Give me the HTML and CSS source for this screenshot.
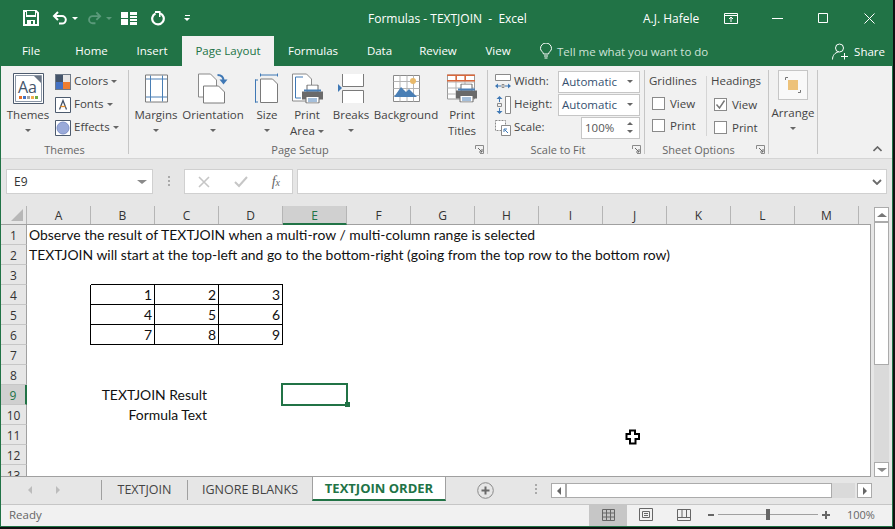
FILE: index.html
```html
<!DOCTYPE html>
<html lang="en">

<head>
    <meta charset="UTF-8">
    <title>Formulas - TEXTJOIN - Excel</title>
    <link rel="stylesheet" href="styles.css">
</head>

<body>
    <svg class="sprite" width="0" height="0">
        <symbol id="printer" viewBox="0 0 21 19">
            <path d="M5 .5h11v7H5z" fill="#fff" stroke="#6a6a6a"/>
            <path d="M0 7h21v8h-4v-3H4v3H0z" fill="#6a6a6a"/>
            <path d="M4 12h13v6.500H4z" fill="#fff" stroke="#6a6a6a"/>
            <path d="M6 14.500h9M6 16.500h9" stroke="#4a7fb5"/>
            <path d="M2 5h17v2H2z" fill="#4a7fb5"/>
        </symbol>
    </svg>

    <div class="app">
        <div class="titlebar">
            <div class="qat">
                <svg class="qat-save" width="16" height="16" viewBox="0 0 16 16"><path d="M1 1h12l2 2v12H1z" fill="none" stroke="#fff" stroke-width="2"/><path d="M3 1h10v6H3z" fill="#fff"/><path d="M4 1h8v4H4z" fill="#217346"/><path d="M4 10h8v5H4z" fill="#fff"/><path d="M8 11h2v3H8z" fill="#217346"/></svg>
                <svg class="qat-undo" width="16" height="14" viewBox="0 0 16 14"><path d="M6 1 2 5l4 4M2 5h8a3.800 3.800 0 0 1 0 7.600H7" fill="none" stroke="#fff" stroke-width="2"/></svg>
                <i class="caret caret-white qat-caret"></i>
                <svg class="qat-redo" width="15" height="14" viewBox="0 0 16 14"><path d="M10 1l4 4-4 4M14 5H6a3.800 3.800 0 0 0 0 7.600h3" fill="none" stroke="#5b9a7b" stroke-width="2"/></svg>
                <i class="caret caret-dim qat-caret"></i>
                <svg class="qat-grid" width="16" height="13" viewBox="0 0 16 13"><path d="M0 0h7v6H0zM0 7h7v6H0zM9 0h7v3H9zM9 4h7v2H9zM9 7h7v2H9zM9 10h7v3H9z" fill="#fff"/></svg>
                <svg class="qat-refresh" width="15" height="15" viewBox="0 0 15 15"><path d="M9 2.200a5.800 5.800 0 1 1-4.500.2" fill="none" stroke="#fff" stroke-width="2.200"/><path d="M8 0v6h1.500V0z" fill="#fff"/><path d="M4 0h5v2H4z" fill="#fff"/></svg>
                <span class="qat-custom"><b></b><i class="caret caret-white"></i></span>
            </div>
            <div class="doc-title">Formulas - TEXTJOIN &nbsp;-&nbsp; Excel</div>
            <div class="user">A.J. Hafele</div>
            <svg class="win-ribbon" width="14" height="11" viewBox="0 0 14 11"><path d="M.5 .5h13v10H.5zM.5 2.500h13M7 9V4M5 6l2-2 2 2" fill="none" stroke="#fff"/></svg>
            <svg class="win-min" width="11" height="1" viewBox="0 0 11 1"><path d="M0 .5h11" stroke="#fff"/></svg>
            <svg class="win-max" width="10" height="10" viewBox="0 0 10 10"><path d="M.5 .5h9v9h-9z" fill="none" stroke="#fff"/></svg>
            <svg class="win-close" width="11" height="11" viewBox="0 0 11 11"><path d="M.5 .5l10 10M10.500 .5l-10 10" fill="none" stroke="#fff"/></svg>
        </div>

        <nav class="tabs">
            <span class="tab tab-file">File</span>
            <span class="tab tab-home">Home</span>
            <span class="tab tab-insert">Insert</span>
            <span class="tab tab-active">Page Layout</span>
            <span class="tab tab-formulas">Formulas</span>
            <span class="tab tab-data">Data</span>
            <span class="tab tab-review">Review</span>
            <span class="tab tab-view">View</span>
            <svg class="bulb" width="12" height="16" viewBox="0 0 12 16"><path d="M3.500 11C3 8.500.5 8 .5 5.500a5.500 5.500 0 0 1 11 0C11.500 8 9 8.500 8.500 11zM4 13h4M4.500 15h3" fill="none" stroke="#fff"/></svg>
            <span class="tell">Tell me what you want to do</span>
            <svg class="share-icon" width="17" height="17" viewBox="0 0 17 17"><circle cx="7.500" cy="5" r="4" fill="none" stroke="#fff"/><path d="M.5 16.500c0-4 2.500-7 6-7.500M12.500 10v6.500M9 13.500h7" fill="none" stroke="#fff"/></svg>
            <span class="share">Share</span>
        </nav>

        <div class="ribbon">
            <section class="group group-themes">
                <div class="group-body">
                    <div class="big big-themes">
                        <svg class="icon" width="31" height="31" viewBox="0 0 31 31"><path d="M.5 .5h30v30H.5z" fill="#fff" stroke="#4d5b6e"/><path d="M2.500 2.500h26v26h-26z" fill="#fff" stroke="#8b96a5"/><path d="M21 3h7v7z" fill="#6b7686"/><text x="5" y="20" class="aa">Aa</text><path d="M6 23h3v3H6z" fill="#e8702a"/><path d="M10 23h3v3h-3z" fill="#4472c4"/><path d="M14 23h3v3h-3z" fill="#a5a5a5"/><path d="M18 23h3v3h-3z" fill="#f0ad4e"/><path d="M22 23h3v3h-3z" fill="#70ad47"/></svg>
                        <span class="big-label">Themes</span>
                        <i class="caret"></i>
                    </div>
                    <div class="minis">
                        <div class="mini">
                            <svg width="16" height="16" viewBox="0 0 16 16"><path d="M0 0h16v16H0z" fill="#6f7a88"/><path d="M1 1h7v7H1z" fill="#44546a"/><path d="M8 1h7v7H8z" fill="#e7e6e6"/><path d="M1 8h7v7H1z" fill="#4472c4"/><path d="M8 8h7v7H8z" fill="#ed7d31"/></svg>
                            <span>Colors</span><i class="caret"></i>
                        </div>
                        <div class="mini">
                            <svg width="16" height="16" viewBox="0 0 16 16"><path d="M.5 .5h15v15H.5z" fill="#fff" stroke="#4d5b6e"/><path d="M4.500 12.500 8 3.500l3.500 9" fill="none" stroke="#44546a" stroke-width="1.300"/><path d="M5.500 9.500h5" stroke="#e8902a" stroke-width="1.300"/></svg>
                            <span>Fonts</span><i class="caret"></i>
                        </div>
                        <div class="mini">
                            <svg width="16" height="16" viewBox="0 0 16 16"><path d="M.5 .5h15v15H.5z" fill="#fff" stroke="#4d5b6e"/><circle cx="8" cy="8" r="6" fill="#9aaad9" stroke="#7f92c8"/></svg>
                            <span>Effects</span><i class="caret"></i>
                        </div>
                    </div>
                </div>
                <div class="group-label">Themes</div>
            </section>

            <section class="group group-setup">
                <div class="group-body">
                    <div class="big big-margins">
                        <svg class="icon" width="23" height="28" viewBox="0 0 23 28"><path d="M.5 .5h22v27H.5z" fill="#fff" stroke="#7a7a7a"/><path d="M5.500 1v26M17.500 1v26M1 4.500h21M1 22.500h21" fill="none" stroke="#4a7fb5"/></svg>
                        <span class="big-label">Margins</span>
                        <i class="caret"></i>
                    </div>
                    <div class="big big-orient">
                        <svg class="icon" width="30" height="30" viewBox="0 0 30 30"><path d="M.5 .5h12l6 6v17H.5z" fill="#fff" stroke="#8a8a8a"/><path d="M5.500 12.500h15l6 6v11h-21z" fill="#fff" stroke="#7a7a7a"/><path d="M19.500 1.500c4 0 6 1.500 6 6" fill="none" stroke="#3f78b5" stroke-width="2"/><path d="M21.500 6h8L25.500 11z" fill="#3f78b5"/></svg>
                        <span class="big-label">Orientation</span>
                        <i class="caret"></i>
                    </div>
                    <div class="big big-size">
                        <svg class="icon" width="24" height="30" viewBox="0 0 24 30"><path d="M5 1.500h18M5.500 0v3M22.500 0v3M.5 6v23M0 6.500h3M0 28.500h3" fill="none" stroke="#3f78b5"/><path d="M5.500 5.500h12l5 5v18.500h-17z" fill="#fff" stroke="#7a7a7a"/></svg>
                        <span class="big-label">Size</span>
                        <i class="caret"></i>
                    </div>
                    <div class="big big-area">
                        <svg class="icon" width="31" height="30" viewBox="0 0 31 30"><path d="M.5 .5h14l5 5v22H.5z" fill="#fff" stroke="#8a8a8a"/><path d="M11 3.500H3.500v21H9" fill="none" stroke="#3f78b5"/><use href="#printer" x="10" y="11" width="21" height="19"/></svg>
                        <span class="big-label">Print</span>
                        <span class="big-label">Area<i class="caret caret-inline"></i></span>
                    </div>
                    <div class="big big-breaks">
                        <svg class="icon" width="26" height="29" viewBox="0 0 26 29"><path d="M4.500 0v12.500h21V0M4.500 29V16.500h21V29" fill="#fff" stroke="#7a7a7a"/><path d="M0 10l4 4-4 4z" fill="#3f78b5"/></svg>
                        <span class="big-label">Breaks</span>
                        <i class="caret"></i>
                    </div>
                    <div class="big big-bg">
                        <svg class="icon" width="27" height="27" viewBox="0 0 27 27"><path d="M.5 .5h26v26H.5z" fill="#fff" stroke="#8a8a8a"/><path d="M.5 6.500h26M.5 13.500h26M.5 20.500h26M7 .5v26M14 .5v26M20.500 .5v26" fill="none" stroke="#b5b5b5"/><circle cx="20" cy="6" r="3" fill="#e8b96a"/><path d="M1 22l7-10 5 5 3-3 8 8z" fill="#4a7fb5"/></svg>
                        <span class="big-label">Background</span>
                    </div>
                    <div class="big big-titles">
                        <svg class="icon" width="30" height="28" viewBox="0 0 30 28"><path d="M.5 .5h27v24H.5z" fill="#fff" stroke="#9a9a9a"/><path d="M.5 7.500h27M.5 13.500h27M.5 19.500h27M9 1v23M18 1v23" fill="none" stroke="#b5b5b5"/><path d="M0 0h28v1.500H0zM0 5.500h28V7H0zM8.500 0H10v6H8.500zM17.500 0H19v6h-1.500z" fill="#d9683c"/><use href="#printer" x="9" y="9" width="21" height="19"/></svg>
                        <span class="big-label">Print</span>
                        <span class="big-label">Titles</span>
                    </div>
                </div>
                <div class="group-label has-launcher">Page Setup</div>
                <svg class="launcher" width="9" height="9" viewBox="0 0 9 9"><path d="M.5 4V.5H8.500V8.500H5" fill="none" stroke="#8a8a8a"/><path d="M3 3l4 4M7 4v3H4" fill="none" stroke="#6a6a6a"/></svg>
            </section>

            <section class="group group-scale">
                <div class="group-body scale-rows">
                    <div class="scale-row">
                        <svg width="16" height="16" viewBox="0 0 16 16"><path d="M.5 .5h15v6h-15z" fill="#fff" stroke="#8a8a8a"/><path d="M0 12l3-2.500v5zM16 12l-3-2.500v5z" fill="#3f78b5"/><path d="M3 11.500h3v1H3zM10 11.500h3v1h-3z" fill="#3f78b5"/><path d="M7 10.500h2v3H7z" fill="none" stroke="#8a8a8a"/></svg>
                        <span class="scale-label">Width:</span>
                        <div class="combo">Automatic<i class="caret"></i></div>
                    </div>
                    <div class="scale-row">
                        <svg width="16" height="18" viewBox="0 0 16 18"><path d="M10.500 .5h5v17h-5z" fill="#fff" stroke="#8a8a8a"/><path d="M4.500 0l3 3h-6zM4.500 18l3-3h-6z" fill="#3f78b5"/><path d="M4 3h1v3H4zM4 12h1v3H4z" fill="#3f78b5"/><path d="M2.500 7.500h4v3h-4z" fill="none" stroke="#8a8a8a"/></svg>
                        <span class="scale-label">Height:</span>
                        <div class="combo">Automatic<i class="caret"></i></div>
                    </div>
                    <div class="scale-row">
                        <svg width="16" height="16" viewBox="0 0 16 16"><path d="M.5 .5h10v10H.5z" fill="#fff" stroke="#8a8a8a" stroke-dasharray="2 1"/><path d="M6.500 5.500h9v10h-9z" fill="#fff" stroke="#8a8a8a"/><path d="M13 13L9.500 9.500M9 12V9h3" fill="none" stroke="#3f78b5"/></svg>
                        <span class="scale-label">Scale:</span>
                        <div class="combo combo-scale">100%
                            <span class="spin"><i class="caret caret-up"></i><i class="caret"></i></span>
                        </div>
                    </div>
                </div>
                <div class="group-label has-launcher">Scale to Fit</div>
                <svg class="launcher" width="9" height="9" viewBox="0 0 9 9"><path d="M.5 4V.5H8.500V8.500H5" fill="none" stroke="#8a8a8a"/><path d="M3 3l4 4M7 4v3H4" fill="none" stroke="#6a6a6a"/></svg>
            </section>

            <section class="group group-sheet">
                <div class="group-body">
                    <div class="opt opt-grid">
                        <div class="opt-title">Gridlines</div>
                        <div class="opt-row"><i class="check"></i>View</div>
                        <div class="opt-row"><i class="check"></i>Print</div>
                    </div>
                    <div class="opt">
                        <div class="opt-title">Headings</div>
                        <div class="opt-row"><i class="check"><svg width="11" height="11" viewBox="0 0 11 11"><path d="M1.500 5.500 4.500 9 9.500 1.500" fill="none" stroke="#777" stroke-width="1.400"/></svg></i>View</div>
                        <div class="opt-row"><i class="check"></i>Print</div>
                    </div>
                </div>
                <div class="group-label has-launcher">Sheet Options</div>
                <svg class="launcher" width="9" height="9" viewBox="0 0 9 9"><path d="M.5 4V.5H8.500V8.500H5" fill="none" stroke="#8a8a8a"/><path d="M3 3l4 4M7 4v3H4" fill="none" stroke="#6a6a6a"/></svg>
            </section>

            <section class="group group-arrange">
                <div class="arrange-btn">
                    <svg width="16" height="16" viewBox="0 0 16 16"><path d="M.5 3V.5H3M15.500 13v2.500H13" fill="none" stroke="#777"/><path d="M3 3h10v10H3z" fill="#edc27a"/></svg>
                </div>
                <span class="big-label arrange-label">Arrange</span>
                <i class="caret"></i>
            </section>

            <svg class="collapse" width="9" height="6" viewBox="0 0 9 6"><path d="M.5 5l4-4 4 4" fill="none" stroke="#666" stroke-width="1.600"/></svg>
        </div>

        <div class="formula-band">
            <div class="namebox">E9<i class="caret caret-big"></i></div>
            <span class="dots"><b></b><b></b><b></b></span>
            <div class="fx-box">
                <svg width="12" height="12" viewBox="0 0 12 12"><path d="M1 1l10 10M11 1 1 11" fill="none" stroke="#c6c6c6" stroke-width="1.600"/></svg>
                <svg width="14" height="12" viewBox="0 0 14 12"><path d="M1 6l4 4 8-9" fill="none" stroke="#c6c6c6" stroke-width="2"/></svg>
                <span class="fx">f<small>x</small></span>
            </div>
            <div class="formula-input">
                <svg width="10" height="6" viewBox="0 0 10 6"><path d="M1 1l4 4 4-4" fill="none" stroke="#6a6a6a" stroke-width="1.800"/></svg>
            </div>
        </div>

        <div class="work">
            <div class="sheet">
                <div class="col-heads">
                    <div class="corner"><i></i></div>
                    <div class="col">A</div>
                    <div class="col">B</div>
                    <div class="col">C</div>
                    <div class="col">D</div>
                    <div class="col col-on">E</div>
                    <div class="col">F</div>
                    <div class="col">G</div>
                    <div class="col">H</div>
                    <div class="col">I</div>
                    <div class="col">J</div>
                    <div class="col">K</div>
                    <div class="col">L</div>
                    <div class="col">M</div>
                </div>
                <div class="rows">
                    <div class="row"><div class="num">1</div><div class="text">Observe the result of TEXTJOIN when a multi-row / multi-column range is selected</div></div>
                    <div class="row"><div class="num">2</div><div class="text">TEXTJOIN will start at the top-left and go to the bottom-right (going from the top row to the bottom row)</div></div>
                    <div class="row"><div class="num">3</div><div class="cell"></div><div class="cell top"></div><div class="cell top"></div><div class="cell top"></div></div>
                    <div class="row"><div class="num">4</div><div class="cell edge"></div><div class="cell box">1</div><div class="cell box">2</div><div class="cell box">3</div></div>
                    <div class="row"><div class="num">5</div><div class="cell edge"></div><div class="cell box">4</div><div class="cell box">5</div><div class="cell box">6</div></div>
                    <div class="row"><div class="num">6</div><div class="cell edge"></div><div class="cell box">7</div><div class="cell box">8</div><div class="cell box">9</div></div>
                    <div class="row"><div class="num">7</div></div>
                    <div class="row"><div class="num">8</div></div>
                    <div class="row"><div class="num num-on">9</div><div class="label">TEXTJOIN Result</div><div class="cell"></div><div class="cell selected"></div></div>
                    <div class="row"><div class="num">10</div><div class="label">Formula Text</div></div>
                    <div class="row"><div class="num">11</div></div>
                    <div class="row"><div class="num">12</div></div>
                    <div class="row"><div class="num">13</div></div>
                </div>
            </div>
            <div class="vscroll">
                <div class="sb-btn"><i class="caret caret-up caret-big"></i></div>
                <div class="sb-thumb"></div>
                <div class="sb-track"></div>
                <div class="sb-btn"><i class="caret caret-big"></i></div>
            </div>
        </div>

        <div class="sheet-tabs">
            <div class="nav-arrows"><i class="tri tri-left"></i><i class="tri tri-right"></i></div>
            <div class="sheet-tab sheet-tab-1">TEXTJOIN</div>
            <div class="sheet-tab sheet-tab-2">IGNORE BLANKS</div>
            <div class="sheet-tab-on">TEXTJOIN ORDER</div>
            <svg class="add-sheet" width="17" height="17" viewBox="0 0 17 17"><circle cx="8.500" cy="8.500" r="7.800" fill="none" stroke="#8a8a8a"/><path d="M4.500 8.500h8M8.500 4.500v8" fill="none" stroke="#6a6a6a" stroke-width="2"/></svg>
            <span class="dots dots-tabs"><b></b><b></b><b></b></span>
            <div class="hscroll">
                <div class="hs-btn"><i class="tri tri-left tri-dark"></i></div>
                <div class="hs-thumb"></div>
                <div class="hs-track"></div>
                <div class="hs-btn hs-last"><i class="tri tri-right tri-dark"></i></div>
            </div>
        </div>

        <footer class="status">
            <span class="ready">Ready</span>
            <div class="view-btn view-on">
                <svg width="13" height="12" viewBox="0 0 13 12"><path d="M.5 .5h12v11H.5zM.5 4h12M.5 8h12M4.500 .5v11M8.500 .5v11" fill="none" stroke="#666"/></svg>
            </div>
            <div class="view-btn">
                <svg width="14" height="13" viewBox="0 0 14 13"><path d="M.5 .5h13v12H.5zM3.500 3.500h7v6h-7zM5 5.500h4M5 7.500h4" fill="none" stroke="#666"/></svg>
            </div>
            <div class="view-btn">
                <svg width="14" height="12" viewBox="0 0 14 12"><path d="M.5 .5h13v11H.5zM.5 8.500h13M5 .5v8M9.500 .5v8" fill="none" stroke="#666"/></svg>
            </div>
            <div class="zoom-minus"></div>
            <div class="zoom-track"><i></i></div>
            <svg class="zoom-plus" width="8" height="8" viewBox="0 0 8 8"><path d="M0 4h8M4 0v8" stroke="#666" stroke-width="2"/></svg>
            <span class="zoom-pct">100%</span>
        </footer>

        <svg class="cell-cursor" width="16" height="16" viewBox="0 0 16 16"><path d="M5 1.500h5V5h4v5h-3.500v4.500H5V10H1.500V5H5z" fill="#fff" stroke="#000" stroke-width="2"/></svg>
    </div>
</body>

</html>
```

FILE: styles.css
```css
html,
body {
    margin: 0;
    background: #111;
}

.sprite {
    display: block;
}

.app {
    position: relative;
    display: flex;
    flex-direction: column;
    width: 893px;
    height: 527px;
    box-sizing: border-box;
    border: 1px solid #217346;
    border-top: 0;
    background: #e6e6e6;
    font-family: "Open Sans", "Liberation Sans", sans-serif;
    font-size: 12px;
    color: #444;
    overflow: hidden;
}

.caret {
    display: inline-block;
    width: 0;
    height: 0;
    border-top: 3px solid #666;
    border-left: 3px solid transparent;
    border-right: 3px solid transparent;
}

.caret-up {
    border-top: 0;
    border-bottom: 3px solid #666;
}

.caret-big {
    border-top-width: 4px;
    border-left-width: 5px;
    border-right-width: 5px;
    border-top-color: #8a8a8a;
}

.caret-up.caret-big {
    border-top-width: 0;
    border-bottom-width: 4px;
    border-bottom-color: #777;
}

.caret-white {
    border-top-color: #fff;
}

.caret-dim {
    border-top-color: #5b9a7b;
}

.caret-inline {
    margin-left: 3px;
    vertical-align: middle;
}

/* title bar */
.titlebar {
    display: flex;
    align-items: center;
    height: 36px;
    background: #217346;
    color: #fff;
}

.qat {
    display: flex;
    align-items: center;
    width: 367px;
}

.qat-save {
    margin-left: 22px;
}

.qat-undo {
    margin-left: 13px;
}

.qat-caret {
    margin-left: 4px;
}

.qat-redo {
    margin-left: 9px;
}

.qat-grid {
    margin-left: 9px;
}

.qat-refresh {
    margin-left: 14px;
}

.qat-custom {
    display: flex;
    flex-direction: column;
    align-items: center;
    gap: 2px;
    margin-left: 18px;
}

.qat-custom b {
    width: 5px;
    height: 1px;
    background: #fff;
}

.doc-title {
    width: 275px;
    white-space: nowrap;
    font-size: 12px;
}

.user {
    width: 81px;
    white-space: nowrap;
    font-size: 12px;
}

.win-min {
    margin-left: 34px;
}

.win-max {
    margin-left: 35px;
}

.win-close {
    margin-left: 36px;
}

/* ribbon tabs */
.tabs {
    display: flex;
    align-items: center;
    height: 30px;
    background: #217346;
    color: #fff;
    font-size: 11.500px;
}

.tab {
    height: 30px;
    line-height: 30px;
    text-align: center;
}

.tab-file {
    width: 60px;
}

.tab-home {
    width: 61px;
}

.tab-insert {
    width: 60px;
}

.tab-active {
    width: 92px;
    background: #f1f1f1;
    color: #217346;
}

.tab-formulas {
    width: 78px;
}

.tab-data {
    width: 55px;
}

.tab-review {
    width: 62px;
}

.tab-view {
    width: 58px;
}

.bulb {
    margin-left: 13px;
}

.tell {
    margin-left: 5px;
    color: #cfe3d8;
    white-space: nowrap;
}

.share-icon {
    margin-left: auto;
}

.share {
    margin: 0 7px 0 5px;
}

/* ribbon */
.ribbon {
    display: flex;
    height: 93px;
    box-sizing: border-box;
    padding-top: 4px;
    background: #f1f1f1;
    border-bottom: 1px solid #d5d5d5;
    font-size: 11.500px;
}

.group {
    position: relative;
    display: flex;
    flex-direction: column;
    height: 84px;
    box-sizing: border-box;
    border-right: 1px solid #c6c6c6;
}

.group-themes {
    width: 128px;
}

.group-setup {
    width: 359px;
}

.group-scale {
    width: 157px;
}

.group-sheet {
    width: 124px;
}

.group-arrange {
    width: 49px;
    align-items: center;
}

.group-body {
    display: flex;
    flex: 1;
}

.group-label {
    height: 12px;
    line-height: 16px;
    text-align: center;
    font-size: 11px;
    color: #666;
    white-space: nowrap;
}

.has-launcher {
    padding-right: 16px;
}

.launcher {
    position: absolute;
    right: 3px;
    bottom: 0;
}

.big {
    display: flex;
    flex-direction: column;
    align-items: center;
    flex: none;
}

.big .icon {
    flex: none;
    height: 37px;
}

.big-label {
    height: 16px;
    line-height: 15px;
    white-space: nowrap;
}

.big > .caret {
    margin-top: 6px;
}

.big-themes {
    width: 54px;
}

.big-margins {
    width: 54px;
}

.big-orient {
    width: 60px;
}

.big-size {
    width: 48px;
}

.big-area {
    width: 32px;
}

.big-breaks {
    width: 56px;
}

.big-bg {
    width: 54px;
}

.big-titles {
    width: 54px;
    padding-left: 4px;
    box-sizing: border-box;
}

.aa {
    font-family: "Open Sans", sans-serif;
    font-size: 16px;
    fill: #44546a;
}

.minis {
    display: flex;
    flex-direction: column;
}

.mini {
    display: flex;
    align-items: center;
    height: 23px;
}

.mini span {
    margin: 0 3px;
    padding-bottom: 2px;
}

/* scale to fit */
.scale-rows {
    flex-direction: column;
    padding-left: 7px;
}

.scale-row {
    display: flex;
    align-items: center;
    height: 23px;
}

.scale-row svg {
    flex: none;
}

.scale-label {
    width: 44px;
    margin-left: 3px;
    padding-bottom: 2px;
}

.combo {
    display: flex;
    align-items: center;
    justify-content: space-between;
    width: 82px;
    height: 22px;
    box-sizing: border-box;
    padding: 0 6px 0 3px;
    background: #fff;
    border: 1px solid #c6c6c6;
    color: #35506f;
}

.combo-scale {
    width: 59px;
    margin-left: 23px;
    color: #555;
}

.spin {
    display: flex;
    flex-direction: column;
    gap: 5px;
}

/* sheet options */
.opt {
    display: flex;
    flex-direction: column;
    padding-left: 4px;
}

.opt-grid {
    width: 62px;
    height: 60px;
    margin-top: 6px;
    box-sizing: border-box;
    border-right: 1px solid #d5d5d5;
}

.opt-grid .opt-title {
    margin-top: -6px;
}

.opt-title {
    height: 23px;
    line-height: 21px;
}

.opt-row {
    display: flex;
    align-items: center;
    height: 23px;
}

.check {
    display: flex;
    align-items: center;
    justify-content: center;
    width: 13px;
    height: 13px;
    box-sizing: border-box;
    margin: 0 5px 0 3px;
    background: #fff;
    border: 1px solid #8a8a8a;
}

/* arrange */
.arrange-btn {
    display: flex;
    align-items: center;
    justify-content: center;
    flex: none;
    width: 30px;
    height: 30px;
    box-sizing: border-box;
    background: #f9f9f9;
    border: 1px solid #c6c6c6;
}

.arrange-label {
    margin-top: 5px;
}

.group-arrange .caret {
    margin-top: 6px;
}

.collapse {
    margin: 76px 0 0 55px;
}

/* formula bar */
.formula-band {
    display: flex;
    align-items: flex-start;
    height: 47px;
    box-sizing: border-box;
    padding-top: 10px;
}

.namebox {
    display: flex;
    align-items: center;
    justify-content: space-between;
    width: 147px;
    height: 25px;
    box-sizing: border-box;
    margin-left: 5px;
    padding: 0 5px 0 7px;
    background: #fff;
    border: 1px solid #d0d0d0;
    color: #333;
}

.dots {
    display: flex;
    flex-direction: column;
    gap: 2px;
    margin: 7px 14px 0 15px;
}

.dots b {
    width: 2px;
    height: 2px;
    background: #aaa;
}

.fx-box {
    display: flex;
    align-items: center;
    justify-content: space-between;
    width: 109px;
    height: 25px;
    box-sizing: border-box;
    padding: 0 12px 0 13px;
    background: #fff;
    border: 1px solid #d0d0d0;
}

.fx {
    font-family: "Liberation Serif", serif;
    font-style: italic;
    font-size: 14px;
    color: #666;
}

.fx small {
    font-size: 10px;
}

.formula-input {
    display: flex;
    align-items: center;
    justify-content: flex-end;
    width: 590px;
    height: 25px;
    box-sizing: border-box;
    margin-left: 4px;
    padding-right: 4px;
    background: #fff;
    border: 1px solid #d0d0d0;
}

/* sheet */
.work {
    display: flex;
    height: 271px;
}

.sheet {
    width: 870px;
    flex: none;
}

.col-heads {
    display: flex;
    height: 19px;
    box-sizing: border-box;
    border-bottom: 1px solid #a0a0a0;
}

.corner {
    width: 26px;
    flex: none;
    box-sizing: border-box;
    padding: 3px 0 0 10px;
    border-right: 1px solid #b5b5b5;
}

.corner i {
    display: block;
    width: 12px;
    height: 12px;
    background: #b7b7b7;
    clip-path: polygon(100% 0, 100% 100%, 0 100%);
}

.col {
    flex: none;
    width: 64px;
    box-sizing: border-box;
    text-align: center;
    line-height: 19px;
    border-right: 1px solid #b5b5b5;
    color: #333;
}

.col-on {
    height: 19px;
    background: #d0d0d0;
    border-bottom: 2px solid #217346;
    color: #217346;
}

.rows {
    height: 252px;
    box-sizing: border-box;
    background: #fff;
    border-right: 1px solid #a0a0a0;
    border-bottom: 1px solid #a0a0a0;
    overflow: hidden;
    font-family: Lato, "Liberation Sans", sans-serif;
    font-size: 13.930px;
    color: #111;
}

.row {
    display: flex;
    height: 20px;
    line-height: 20px;
}

.num {
    flex: none;
    width: 26px;
    box-sizing: border-box;
    background: #e6e6e6;
    border-right: 1px solid #a0a0a0;
    border-bottom: 1px solid #c6c6c6;
    text-align: center;
    font-family: "Open Sans", sans-serif;
    font-size: 12px;
    line-height: 21px;
    color: #333;
}

.num-on {
    background: #d0d0d0;
    border-right: 2px solid #217346;
    color: #217346;
}

.text {
    padding-left: 2px;
    white-space: nowrap;
}

.cell {
    position: relative;
    flex: none;
    width: 64px;
    height: 20px;
    box-sizing: border-box;
    padding-right: 2px;
    text-align: right;
}

.top {
    border-bottom: 1px solid #000;
}

.edge {
    border-right: 1px solid #000;
}

.box {
    border-right: 1px solid #000;
    border-bottom: 1px solid #000;
}

.label {
    flex: none;
    width: 192px;
    box-sizing: border-box;
    padding-right: 12px;
    text-align: right;
    white-space: nowrap;
}

.selected::after {
    content: "";
    position: absolute;
    inset: -2px -1px -1px -2px;
    border: 2px solid #217346;
}

.selected::before {
    content: "";
    position: absolute;
    z-index: 1;
    right: -3px;
    bottom: -2px;
    width: 5px;
    height: 5px;
    background: #217346;
}

.vscroll {
    display: flex;
    flex-direction: column;
    width: 15px;
    margin: 1px 0 0 3px;
}

.sb-btn {
    display: flex;
    align-items: center;
    justify-content: center;
    height: 15px;
    box-sizing: border-box;
    background: #fff;
    border: 1px solid #ababab;
}

.sb-thumb {
    height: 143px;
    box-sizing: border-box;
    background: #fff;
    border: 1px solid #ababab;
}

.sb-track {
    flex: 1;
    background: #dadada;
}

/* sheet tabs */
.sheet-tabs {
    display: flex;
    align-items: flex-start;
    height: 27px;
    color: #444;
    font-size: 12.500px;
}

.nav-arrows {
    display: flex;
    align-items: center;
    justify-content: space-between;
    width: 101px;
    height: 20px;
    box-sizing: border-box;
    margin-top: 3px;
    padding: 0 41px 0 27px;
    border-right: 1px solid #a0a0a0;
}

.tri {
    display: block;
    width: 0;
    height: 0;
    border-top: 4px solid transparent;
    border-bottom: 4px solid transparent;
}

.tri-left {
    border-right: 4px solid #bcbcbc;
}

.tri-right {
    border-left: 4px solid #bcbcbc;
}

.tri-dark.tri-left {
    border-right-color: #666;
}

.tri-dark.tri-right {
    border-left-color: #666;
}

.sheet-tab {
    height: 20px;
    box-sizing: border-box;
    margin-top: 3px;
    line-height: 20px;
    text-align: center;
    white-space: nowrap;
}

.sheet-tab-1 {
    width: 86px;
    border-right: 1px solid #a0a0a0;
}

.sheet-tab-2 {
    width: 124px;
}

.sheet-tab-on {
    width: 134px;
    height: 24px;
    box-sizing: border-box;
    background: #fff;
    border-left: 1px solid #a0a0a0;
    border-right: 1px solid #a0a0a0;
    border-bottom: 2px solid #217346;
    line-height: 22px;
    text-align: center;
    font-size: 13px;
    font-weight: 700;
    color: #217346;
    white-space: nowrap;
}

.add-sheet {
    margin: 5px 0 0 31px;
}

.dots-tabs {
    margin: 7px 0 0 41px;
}

.hscroll {
    display: flex;
    margin: 6px 0 0 14px;
}

.hs-btn {
    display: flex;
    align-items: center;
    justify-content: center;
    width: 15px;
    height: 15px;
    box-sizing: border-box;
    background: #fff;
    border: 1px solid #ababab;
}

.hs-thumb {
    width: 266px;
    height: 15px;
    box-sizing: border-box;
    background: #fff;
    border: 1px solid #ababab;
}

.hs-track {
    width: 23px;
    height: 15px;
    background: #dadada;
}

.hs-last {
    margin-left: 2px;
}

/* status bar */
.status {
    display: flex;
    align-items: center;
    height: 22px;
    box-sizing: border-box;
    background: #f1f1f1;
    border-top: 1px solid #c6c6c6;
    color: #666;
    font-size: 11.500px;
}

.ready {
    flex: none;
    width: 588px;
    box-sizing: border-box;
    margin-bottom: 2px;
    padding-left: 8px;
}

.view-btn {
    display: flex;
    align-items: center;
    justify-content: center;
    width: 38px;
    height: 21px;
    box-sizing: border-box;
    padding-bottom: 2px;
}

.view-on {
    background: #c6c6c6;
}

.zoom-minus {
    width: 6px;
    height: 2px;
    margin: 0 0 2px 5px;
    background: #666;
}

.zoom-track {
    position: relative;
    width: 100px;
    height: 1px;
    margin: 0 0 2px 4px;
    background: #a0a0a0;
}

.zoom-track i {
    position: absolute;
    left: 48px;
    top: -5px;
    width: 4px;
    height: 11px;
    background: #666;
}

.zoom-plus {
    margin: 0 0 2px 4px;
}

.zoom-pct {
    margin: 0 0 2px 17px;
    font-size: 11px;
}

.cell-cursor {
    position: absolute;
    left: 624px;
    top: 429px;
}
```
